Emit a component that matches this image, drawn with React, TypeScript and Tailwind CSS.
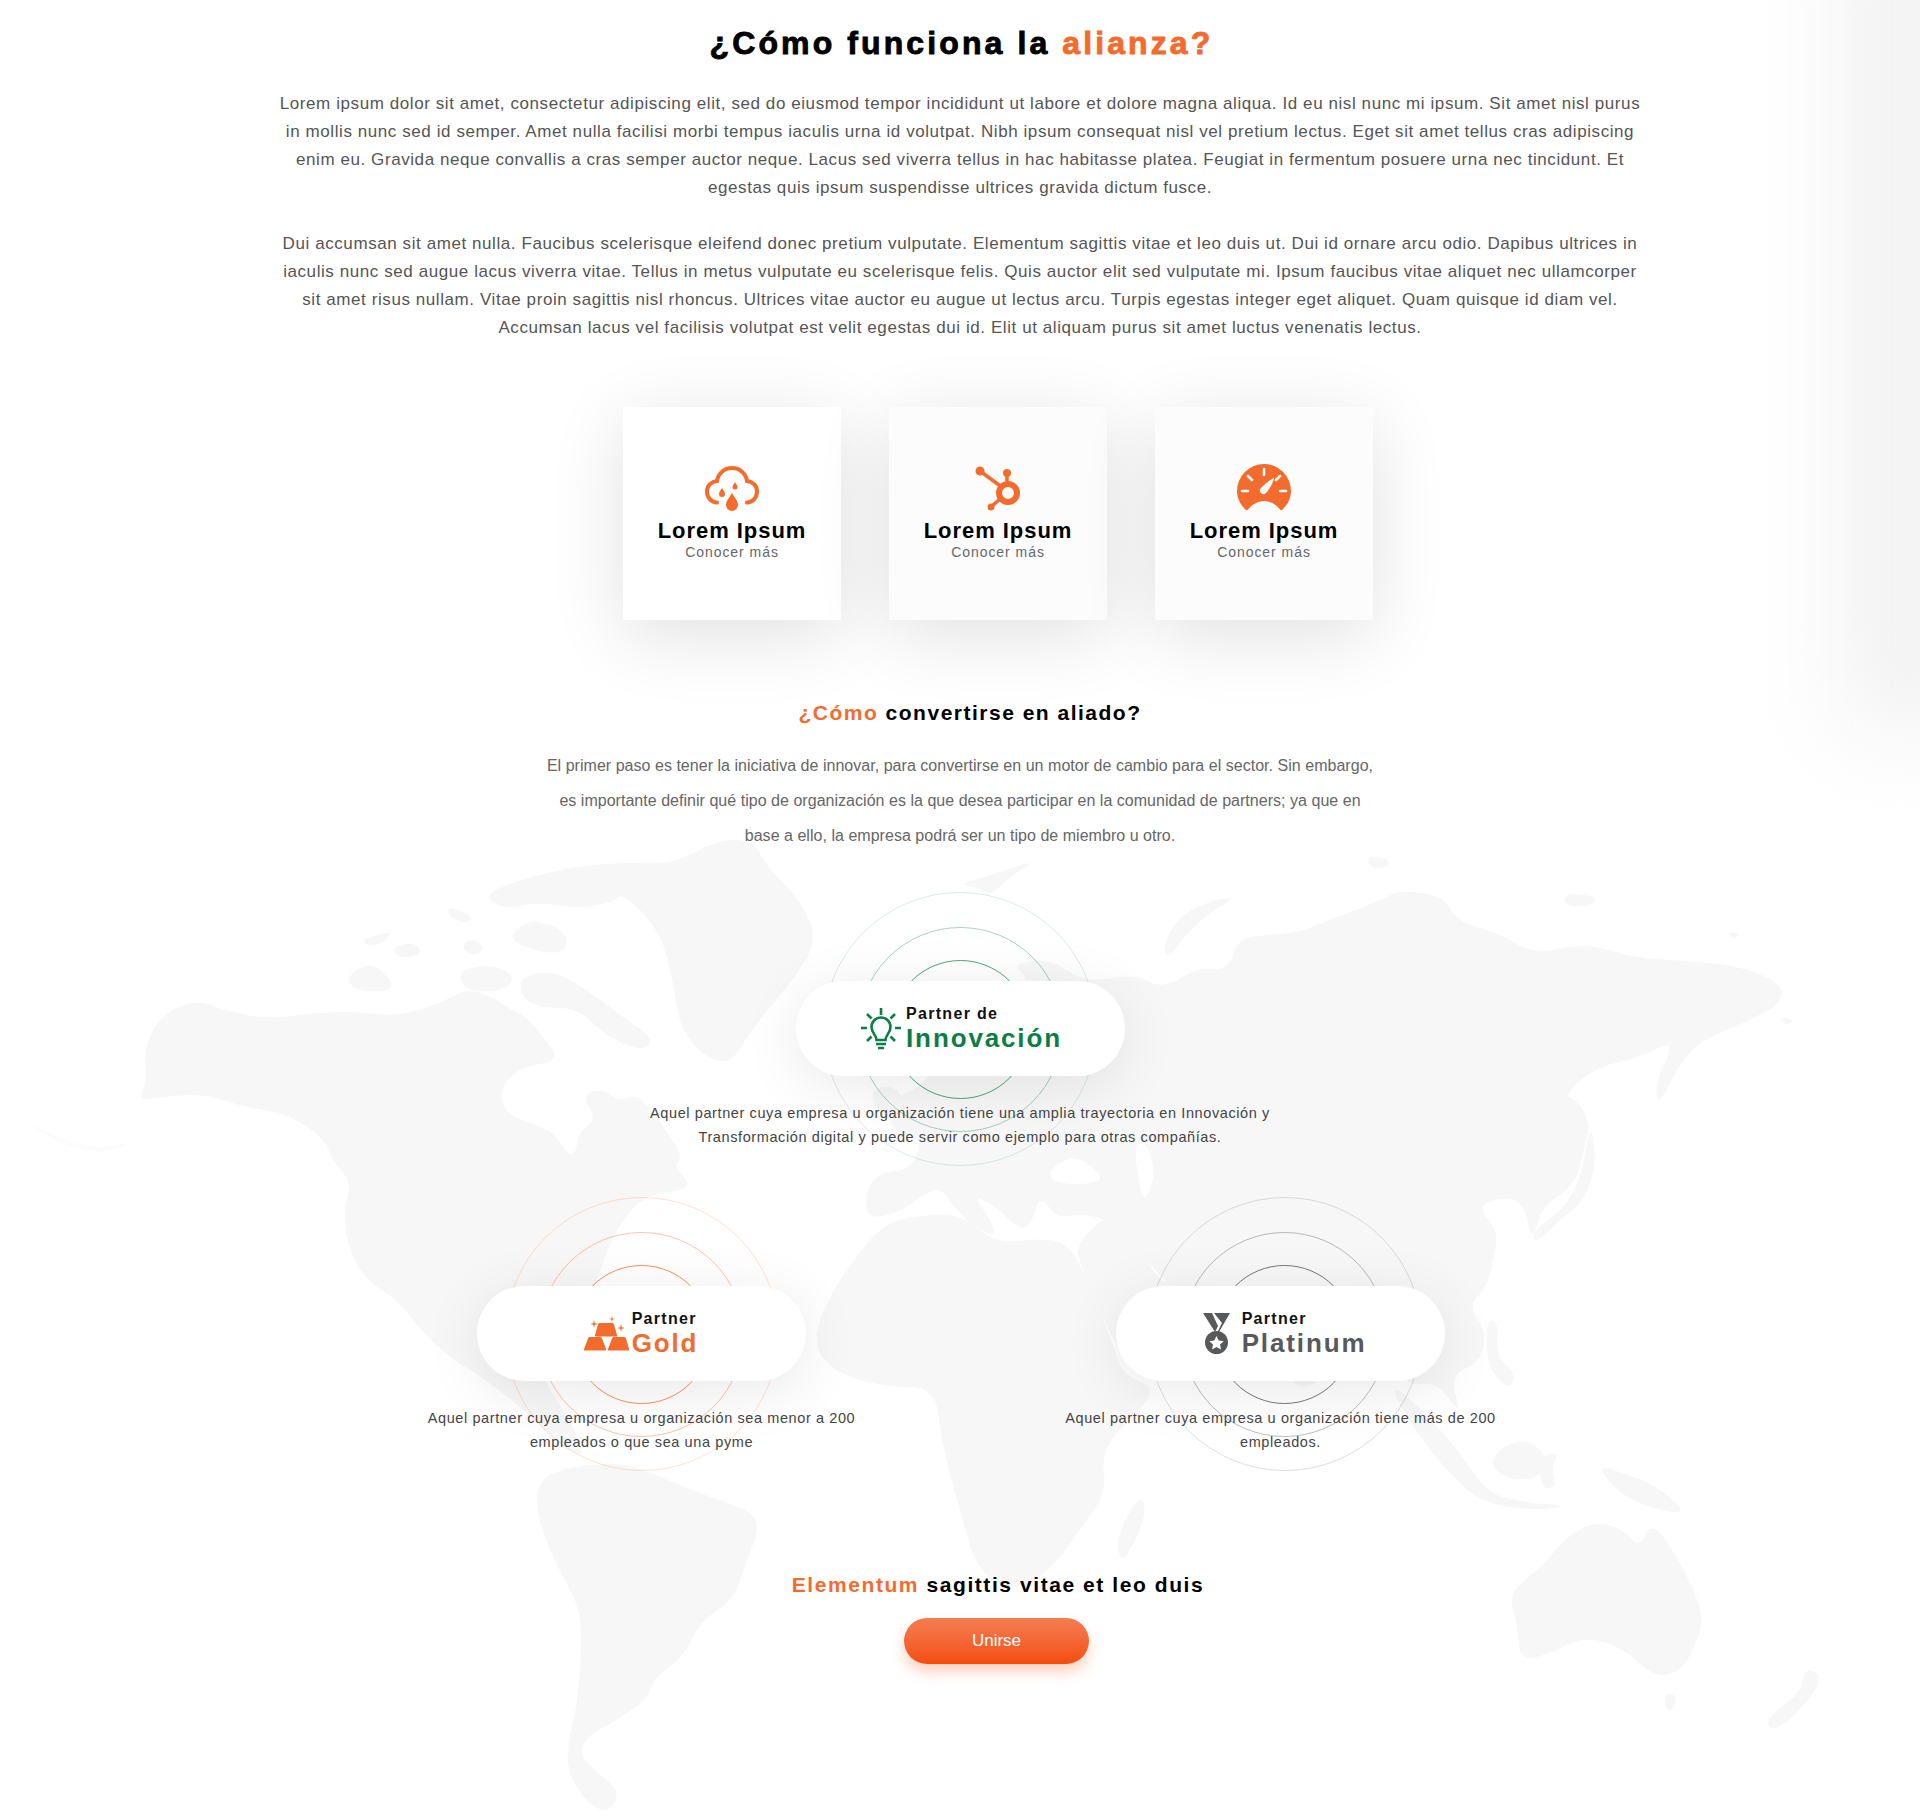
import type { ReactNode } from 'react'

// outlines traced over the reference, smoothed through midpoints
const smooth = (pts: string) => {
  const p = pts.trim().split(/\s+/).map((s) => s.split(',').map(Number))
  const mid = (a: number[], b: number[]) => `${(a[0] + b[0]) / 2} ${(a[1] + b[1]) / 2}`
  let d = `M${mid(p[p.length - 1], p[0])}`
  p.forEach((q, i) => {
    d += ` Q${q[0]} ${q[1]} ${mid(q, p[(i + 1) % p.length])}`
  })
  return d + 'Z'
}

const land = [
  // north america
  '235,330 270,275 325,258 360,272 430,288 500,280 570,275 640,283 680,275 720,262 760,240 800,250 830,270 860,285 890,320 915,355 850,365 815,400 825,440 880,460 910,475 925,505 940,505 945,470 975,450 950,410 985,400 1010,420 1040,410 1060,430 1090,470 1115,510 1100,525 1135,560 1060,570 1025,600 1000,640 985,680 965,730 1000,790 960,790 900,800 880,860 930,930 960,1000 905,965 860,920 790,865 730,830 680,780 650,740 600,710 570,660 560,600 575,550 545,520 530,480 470,440 400,430 340,410 290,410 225,420 240,390',
  // greenland and ellesmere
  '800,80 900,50 1000,35 1100,40 1170,0 1230,0 1250,40 1310,100 1335,160 1300,220 1230,300 1195,360 1150,350 1110,300 1100,230 1080,150 1020,85 1000,100 950,110 880,100 830,110 800,100',
  // arctic islands
  '850,220 900,210 950,235 1010,280 1070,320 1050,340 1000,320 975,300 940,270 880,270 850,250',
  '750,210 800,200 840,215 830,240 780,245 755,235',
  '870,125 930,150 920,185 860,175 830,155',
  '760,160 790,165 785,185 755,180',
  '570,215 610,195 650,240 600,245 570,235',
  '590,160 640,145 630,165 600,170',
  '730,105 775,125 760,135 735,125',
  '640,170 680,165 690,185 650,190',
  // south america
  '880,1030 920,1010 1010,1000 1070,1020 1140,1050 1230,1080 1240,1110 1215,1170 1200,1220 1140,1260 1120,1310 1065,1350 1060,1380 1000,1420 960,1440 945,1470 975,1500 1015,1530 990,1568 950,1540 925,1490 930,1440 945,1380 950,1280 945,1230 905,1160 875,1080',
]

// right half of the map, x shifted by half the viewBox
const shift = (pts: string) =>
  pts
    .trim()
    .split(/\s+/)
    .map((s) => {
      const [x, y] = s.split(',').map(Number)
      return `${x + 1568},${y}`
    })
    .join(' ')

const landRight = [
  // eurasia
  '-153,560 -130,535 -80,530 -60,480 -110,470 -120,420 -70,400 -40,370 -20,330 40,300 120,225 80,200 150,190 200,230 290,215 330,240 390,205 430,210 445,190 450,170 470,155 550,150 600,130 680,100 720,80 790,90 810,130 880,150 940,185 1020,165 1100,190 1200,195 1280,205 1340,230 1345,260 1290,290 1240,310 1200,330 1170,370 1140,430 1135,390 1170,320 1110,350 1040,365 985,410 1010,420 1030,460 1020,490 1010,540 990,565 950,590 935,650 920,580 880,575 845,590 880,630 870,680 860,720 830,750 860,790 850,840 800,860 820,930 780,870 730,880 700,820 640,800 600,860 560,885 530,860 490,800 420,820 350,850 310,865 260,830 195,680 190,650 240,600 290,640 240,610 190,600 160,610 130,570 120,610 100,630 60,590 20,570 50,610 60,640 20,620 -10,590 -30,560 -60,570 -100,600 -153,610',
  // africa
  '-228,760 -178,680 -128,620 -78,605 0,600 60,650 130,640 185,650 250,810 265,860 320,880 290,920 230,980 240,1050 195,1110 160,1160 100,1210 30,1180 0,1080 -30,970 -40,880 -118,880 -198,860 -238,820',
  // madagascar
  '295,1050 305,1080 285,1130 262,1165 255,1120',
  // sumatra and java
  '700,870 760,920 820,990 860,1050 920,1065 1000,1072 930,1078 850,1065 790,1010 730,930',
  // borneo
  '865,990 920,960 960,990 945,1030 880,1025',
  // sulawesi
  '945,990 980,985 965,1010 975,1040 950,1045',
  // new guinea
  '1040,1005 1090,1020 1140,1040 1190,1085 1130,1075 1075,1050',
  // philippines
  '860,770 880,775 875,830 910,860 895,885 860,845',
  // australia
  '895,1210 950,1170 990,1120 1040,1095 1085,1110 1110,1140 1130,1095 1170,1150 1215,1240 1205,1290 1175,1340 1130,1345 1085,1300 1020,1280 960,1310 915,1320 910,1260',
  // tasmania and new zealand
  '1150,1372 1172,1375 1165,1400 1152,1398',
  '1380,1330 1410,1345 1385,1385 1345,1425 1320,1430 1320,1410 1375,1370',
  // japan and korea
  '1030,450 1040,520 1020,580 980,610 940,650 935,630 990,590 1015,540',
  // russian arctic islands
  '330,180 350,130 400,100 455,90 410,115 370,150 345,185',
  '985,85 1040,90 1035,105 990,108',
  '665,25 700,30 700,45 670,45',
  '1250,148 1275,150 1265,160',
  '1340,285 1365,290 1350,298',
  // iceland, britain
  '0,70 40,60 130,30 80,60 50,90 20,75',
  '-150,400 -100,395 -90,440 -130,450',
]

const holes = [
  // black sea, caspian, persian gulf
  '145,530 190,505 240,545 200,555 150,550',
  '285,490 305,485 320,540 300,585 290,540',
  '300,670 345,720 320,700',
]

function WorldMap() {
  return (
    <svg
      className="absolute left-0 top-[840px] h-[975px] w-[1920px]"
      viewBox="0 0 3136 1568"
      preserveAspectRatio="none"
      aria-hidden="true"
    >
      {/* aleutians, very faint */}
      <path d={smooth('30,445 100,490 170,505 230,480 170,498 100,482')} fill="#fcfcfc" />
      {land.map((d, i) => (
        <path key={i} d={smooth(d)} fill="#f7f7f7" />
      ))}
      {landRight.map((d, i) => (
        <path key={i} d={smooth(shift(d))} fill="#f7f7f7" />
      ))}
      {holes.map((d, i) => (
        <path key={i} d={smooth(shift(d))} fill="#ffffff" />
      ))}
    </svg>
  )
}

function CloudIcon() {
  return (
    <svg width="54" height="46" viewBox="0 0 54 46" fill="none">
      <path
        d="M12 36.5C5.5 36 2 31 2 25.5 2 19.5 6.5 15.5 12 15 13 7.5 19.5 2 27 2s14 5.5 15 13c5.5 .5 10 4.5 10 10.5 0 5.5-3.5 10.5-10 11"
        stroke="#f36c2e"
        strokeWidth="4"
        strokeLinecap="round"
      />
      <path d="M27 27c3 5 6 8 6 12a6 6 0 0 1-12 0c0-4 3-7 6-12Z" fill="#f36c2e" />
      <path d="M17 22c1.5 2.5 3 4 3 6a3 3 0 0 1-6 0c0-2 1.5-3.5 3-6Z" fill="#f36c2e" />
      <path d="M30 16c1 2 2.5 3.5 2.5 5a2.5 2.5 0 0 1-5 0c0-1.5 1.5-3 2.5-5Z" fill="#f36c2e" />
    </svg>
  )
}

function HubIcon() {
  return (
    <svg width="46" height="46" viewBox="0 0 46 46" fill="none">
      <circle cx="33" cy="27" r="9" stroke="#f36c2e" strokeWidth="6" />
      <path d="M5 5l23 17M32 8v12M16 41l10-9" stroke="#f36c2e" strokeWidth="3.5" />
      <circle cx="5" cy="5" r="4.5" fill="#f36c2e" />
      <circle cx="32" cy="7" r="4" fill="#f36c2e" />
      <circle cx="16" cy="41" r="3.5" fill="#f36c2e" />
    </svg>
  )
}

function GaugeIcon() {
  return (
    <svg className="-mt-[4px]" width="54" height="47" viewBox="0 0 54 47" fill="none">
      <path
        d="M8 45C3 40 0 34 0 27a27 27 0 0 1 54 0c0 7-3 13-8 18-1 1.5-2 1.5-3 .5C39 40.5 33 37 27 37s-12 3.5-16 8.5c-1 1-2 1-3-.5Z"
        fill="#f36c2e"
      />
      <path
        d="M27 5v6M11 12l4 4M43 12l-4 4M5 27h6M43 27h6"
        stroke="#fff"
        strokeWidth="2.5"
        strokeLinecap="round"
      />
      <path d="M37 14c-1 5-5 12-8 15a3.5 3.5 0 0 1-5-5c3-3 8-8 13-10Z" fill="#fff" />
    </svg>
  )
}

function BulbIcon() {
  return (
    <svg width="40" height="42" viewBox="0 0 40 42" fill="none" stroke="#0b7d45" strokeWidth="2.6">
      <path d="M20 0v7M0 20h6M34 20h6M6 6l4.500 4.500M34 6l-4.500 4.500M6 33l4.500-4.500M34 33l-4.500-4.500" />
      <path d="M15.500 32c0-5-5-7-5-13a9.500 9.500 0 0 1 19 0c0 6-5 8-5 13h-9Z" />
      <path d="M15 36h10M17 40h6" />
    </svg>
  )
}

function BarsIcon() {
  return (
    <svg width="45" height="35" viewBox="0 0 45 35" fill="#f36c2e">
      <path d="M16 7h12c1 0 1.5.5 2 1.5L33 19c.3 1-.3 1.5-1 1.5H12c-.7 0-1.3-.5-1-1.5l3-10.500C14.500 7.500 15 7 16 7Z" />
      <path d="M6 21h10c1 0 1.5.5 2 1.5L22 33c.3 1-.3 1.5-1 1.5H1c-.7 0-1.3-.5-1-1.5l4-10.500C4.500 21.500 5 21 6 21Z" />
      <path d="M30 21h10c1 0 1.5.5 2 1.5L45 33c.3 1-.3 1.5-1 1.5H25c-.7 0-1.3-.5-1-1.5l4-10.500c.5-1 1-1.500 2-1.500Z" />
      <path d="M10 4l.8 3.200L14 8l-3.200.8L10 12l-.8-3.200L6 8l3.200-.8Z" />
      <path d="M28 0l.6 2.400L31 3l-2.400.6L28 6l-.6-2.400L25 3l2.400-.6Z" />
      <path d="M37 8l.8 3.200L41 12l-3.200.8L37 16l-.8-3.200L33 12l3.200-.8Z" />
    </svg>
  )
}

function MedalIcon() {
  return (
    <svg width="27" height="41" viewBox="0 0 27 41" fill="#58595b">
      <path d="M0 0h9l6 13-3 6L0 0Z" />
      <path d="M11 0h16L16 19h-1.500L19 10 11 0Z" />
      <path d="M13.500 18a11.500 11.500 0 1 1 0 23 11.500 11.500 0 0 1 0-23Z" />
      <path
        d="M13.500 23l2.200 4.600 5 .6-3.700 3.400 1 5-4.500-2.500-4.500 2.500 1-5-3.700-3.400 5-.6Z"
        fill="#fff"
      />
    </svg>
  )
}

function ActionCard({ icon, bg }: { icon: ReactNode; bg: string }) {
  return (
    <div className={`flex h-[213px] w-[218px] flex-col items-center pt-[58px] shadow-[0_15px_70px_rgba(0,0,0,0.12)] ${bg}`}>
      <div className="flex h-[48px] items-center">{icon}</div>
      <div className="mt-[6px] text-[22px] font-bold leading-[24px] tracking-[0.95px] text-black">Lorem Ipsum</div>
      <div className="text-[14px] leading-[18px] tracking-[0.95px] text-[#666]">Conocer más</div>
    </div>
  )
}

type PartnerProps = {
  icon: ReactNode
  label: string
  name: string
  nameColor: string
  rings: [string, string, string]
  ringShift?: string
  contentClass: string
  children: ReactNode
}

function Partner({ icon, label, name, nameColor, rings, ringShift, contentClass, children }: PartnerProps) {
  return (
    <div className="relative flex h-[274px] w-[480px] flex-col items-center pt-[89px]">
      <div className={`absolute left-1/2 top-0 flex h-[274px] w-[274px] -translate-x-1/2 items-center justify-center rounded-full border ${rings[0]} ${ringShift ?? ''}`}>
        <div className={`flex h-[205px] w-[205px] items-center justify-center rounded-full border ${rings[1]}`}>
          <div className={`h-[139px] w-[139px] rounded-full border ${rings[2]}`} />
        </div>
      </div>
      <div className={`relative flex h-[95px] w-[329px] shrink-0 items-center justify-center rounded-[48px] bg-white shadow-[0_10px_60px_rgba(0,0,0,0.09)] ${contentClass}`}>
        {icon}
        <div className="flex flex-col">
          <span className="text-[16px] font-bold leading-[18px] tracking-[1.3px] text-[#111]">{label}</span>
          <span className={`text-[26px] font-bold leading-[30px] tracking-[1.87px] ${nameColor}`}>{name}</span>
        </div>
      </div>
      <p className="relative mt-[25px] whitespace-nowrap text-center text-[14.5px] leading-[24px] tracking-[0.6px] text-[#444]">
        {children}
      </p>
    </div>
  )
}

export default function App() {
  return (
    <div className="relative min-h-[1815px] w-full overflow-hidden bg-white font-['Liberation_Sans',Arial,sans-serif]">
      <div className="absolute right-[-50px] top-[-100px] h-[830px] w-[120px] bg-[#f0f0f0] blur-[50px]" />
      <WorldMap />
      <div className="relative flex flex-col items-center">
        <h1 className="ml-[3px] mt-[24px] text-[32px] font-bold leading-[38px] tracking-[3.1px] text-black [-webkit-text-stroke:0.9px_black]">
          ¿Cómo funciona la <span className="text-[#f36c2e] [-webkit-text-stroke:0.9px_#f36c2e]">alianza?</span>
        </h1>
        <div className="mt-[28px] w-[1400px] whitespace-nowrap text-center text-[17px] leading-[28px] tracking-[0.58px] text-[#555]">
          <p>
            Lorem ipsum dolor sit amet, consectetur adipiscing elit, sed do eiusmod tempor incididunt ut labore et dolore magna aliqua. Id eu nisl nunc mi ipsum. Sit amet nisl purus
            <br />
            in mollis nunc sed id semper. Amet nulla facilisi morbi tempus iaculis urna id volutpat. Nibh ipsum consequat nisl vel pretium lectus. Eget sit amet tellus cras adipiscing
            <br />
            enim eu. Gravida neque convallis a cras semper auctor neque. Lacus sed viverra tellus in hac habitasse platea. Feugiat in fermentum posuere urna nec tincidunt. Et
            <br />
            egestas quis ipsum suspendisse ultrices gravida dictum fusce.
          </p>
          <p className="mt-[28px]">
            Dui accumsan sit amet nulla. Faucibus scelerisque eleifend donec pretium vulputate. Elementum sagittis vitae et leo duis ut. Dui id ornare arcu odio. Dapibus ultrices in
            <br />
            iaculis nunc sed augue lacus viverra vitae. Tellus in metus vulputate eu scelerisque felis. Quis auctor elit sed vulputate mi. Ipsum faucibus vitae aliquet nec ullamcorper
            <br />
            sit amet risus nullam. Vitae proin sagittis nisl rhoncus. Ultrices vitae auctor eu augue ut lectus arcu. Turpis egestas integer eget aliquet. Quam quisque id diam vel.
            <br />
            Accumsan lacus vel facilisis volutpat est velit egestas dui id. Elit ut aliquam purus sit amet luctus venenatis lectus.
          </p>
        </div>

        <div className="ml-[76px] mt-[65px] flex gap-[48px]">
          <ActionCard icon={<CloudIcon />} bg="bg-white" />
          <ActionCard icon={<HubIcon />} bg="bg-[#fcfcfc]" />
          <ActionCard icon={<GaugeIcon />} bg="bg-[#fcfcfc]" />
        </div>

        <h2 className="ml-[20px] mt-[80px] text-[21px] font-bold leading-[26px] tracking-[1.5px] text-black">
          <span className="text-[#f36c2e]">¿Cómo</span> convertirse en aliado?
        </h2>
        <p className="mt-[22px] whitespace-nowrap text-center text-[16px] leading-[35px] tracking-[0.03px] text-[#666]">
          El primer paso es tener la iniciativa de innovar, para convertirse en un motor de cambio para el sector. Sin embargo,
          <br />
          es importante definir qué tipo de organización es la que desea participar en la comunidad de partners; ya que en
          <br />
          base a ello, la empresa podrá ser un tipo de miembro u otro.
        </p>

        <div className="mt-[39px]">
          <Partner
            icon={<BulbIcon />}
            label="Partner de"
            name="Innovación"
            nameColor="text-[#0b7d45]"
            rings={['border-[#0b7d45]/15', 'border-[#0b7d45]/35', 'border-[#0b7d45]/70']}
            contentClass="gap-[5px] pl-[3px]"
          >
            Aquel partner cuya empresa u organización tiene una amplia trayectoria en Innovación y
            <br />
            Transformación digital y puede servir como ejemplo para otras compañías.
          </Partner>
        </div>

        <div className="ml-[2px] mt-[31px] flex gap-[159px]">
          <Partner
            icon={<BarsIcon />}
            label="Partner"
            name="Gold"
            nameColor="text-[#f36c2e]"
            rings={['border-[#f36c2e]/20', 'border-[#f36c2e]/40', 'border-[#f36c2e]/75']}
            contentClass="gap-[3px] pr-[1px]"
          >
            Aquel partner cuya empresa u organización sea menor a 200
            <br />
            empleados o que sea una pyme
          </Partner>
          <Partner
            icon={<MedalIcon />}
            label="Partner"
            name="Platinum"
            nameColor="text-[#58595b]"
            rings={['border-[#58595b]/20', 'border-[#58595b]/40', 'border-[#58595b]/80']}
            ringShift="ml-[4px]"
            contentClass="gap-[12px] pl-[8px]"
          >
            Aquel partner cuya empresa u organización tiene más de 200
            <br />
            empleados.
          </Partner>
        </div>

        <h2 className="ml-[76px] mt-[101px] text-[21px] font-bold leading-[26px] tracking-[1.57px] text-black">
          <span className="text-[#f36c2e]">Elementum</span> sagittis vitae et leo duis
        </h2>
        <button
          type="button"
          className="ml-[73px] mt-[20px] h-[46px] w-[185px] rounded-[23px] bg-gradient-to-b from-[#f47d50] to-[#f44c05] text-[17px] text-white shadow-[0_8px_14px_rgba(244,76,5,0.25)]"
        >
          Unirse
        </button>
      </div>
    </div>
  )
}
